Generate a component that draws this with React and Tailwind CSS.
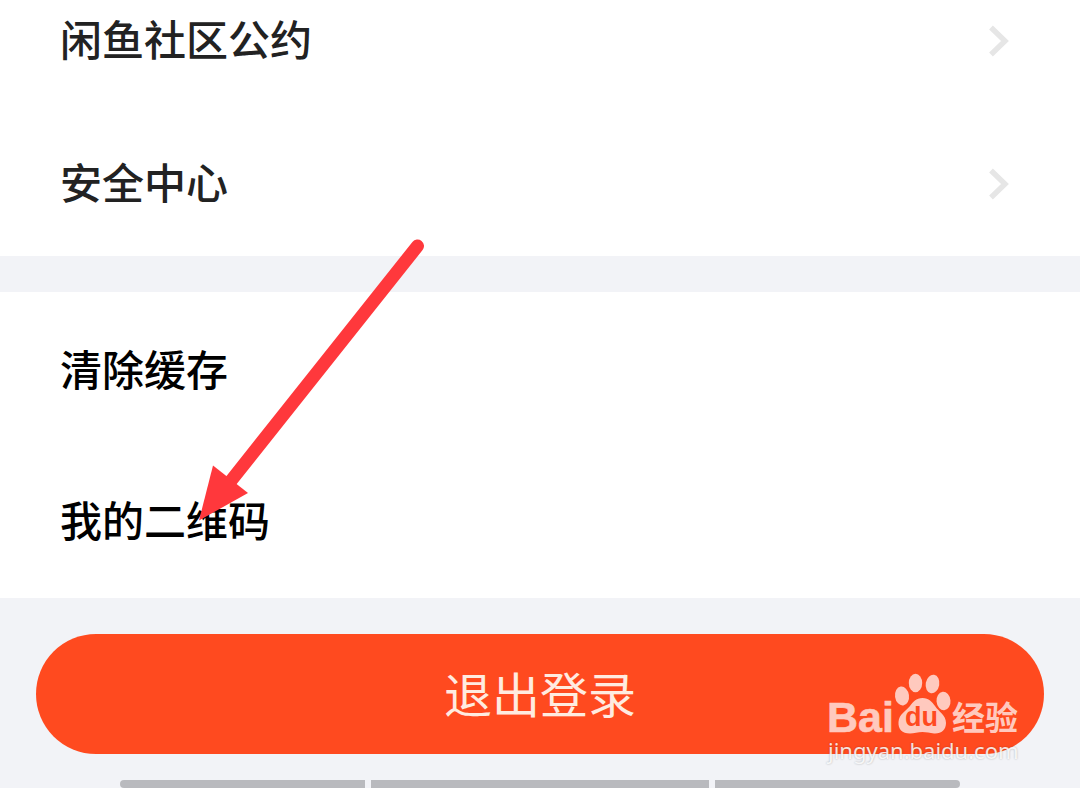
function Chevron() {
  return (
    <svg className="h-8 w-5 shrink-0" viewBox="0 0 20 32" fill="none" aria-hidden="true">
      <path d="M2 2.5 L16 16 L2 29.5" stroke="#e6e6e6" strokeWidth="5.4" />
    </svg>
  );
}

function Row({ label, chevron = false, className }) {
  return (
    <li>
      <a href="#" className={`flex items-center justify-between pl-[60px] pr-[71px] ${className}`}>
        <span className="pb-[6px] text-[42px] leading-[60px] font-medium">{label}</span>
        {chevron && <Chevron />}
      </a>
    </li>
  );
}

function Arrow() {
  return (
    <svg
      className="pointer-events-none absolute left-[190px] top-[230px] h-[300px] w-[250px]"
      viewBox="190 230 250 300"
      aria-hidden="true"
    >
      <path d="M417.500 246 L230 482" stroke="#ff383c" strokeWidth="13" strokeLinecap="round" />
      <path d="M213 465.500 L248 493 L199 520.500 Z" fill="#ff383c" />
    </svg>
  );
}

function Watermark() {
  return (
    <div className="pointer-events-none absolute bottom-[26px] right-[50px] w-[210px] font-['Noto_Sans','Noto_Sans_CJK_SC',sans-serif]">
      <svg className="block h-[66px] w-[210px] overflow-visible" viewBox="820 672 210 66" aria-label="Baidu 经验">
        <g fill="#ffc9be">
          <text x="827" y="732" fontSize="43" fontWeight="700" stroke="#ffc9be" strokeWidth="0.6" fontFamily="Liberation Sans, sans-serif">Bai</text>
          <ellipse cx="902" cy="696" rx="7" ry="9.500" transform="rotate(-8 902 696)" />
          <ellipse cx="915.500" cy="683" rx="6.700" ry="9.300" />
          <ellipse cx="932.500" cy="684" rx="6.800" ry="9.300" transform="rotate(10 932.500 684)" />
          <ellipse cx="943.500" cy="701" rx="7" ry="9.300" transform="rotate(-5 943.500 701)" />
          <path d="M922.500 698 C929 698 932 702 935 706 C939 712 946 715 946 723 C946 730 941 734 934 733.500 C930 733 926 732 922.500 732 C918 732 914 733.500 910 733.500 C902 733.500 898 729 898.500 722 C899 714 906 711 910 706 C913 702 916 698 922.500 698 Z" />
          <text x="952" y="730" fontSize="33" fontWeight="700" fontFamily="Noto Sans CJK SC, sans-serif">经验</text>
        </g>
        <text x="905" y="726" fontSize="27" fontWeight="700" fill="#ff4a1f" fontFamily="Liberation Sans, sans-serif">du</text>
      </svg>
      <p className="pl-2 text-[22px] leading-[24px] text-white/85 [text-shadow:0_0_2px_rgb(0_0_0/0.3)]">jingyan.baidu.com</p>
    </div>
  );
}

export default function App() {
  return (
    <main className="relative min-h-screen overflow-hidden bg-[#f2f3f7] font-['Noto_Sans_CJK_SC',sans-serif]">
      <ul className="bg-white text-[#222222]">
        <Row label="闲鱼社区公约" chevron className="h-[112px] pb-[30px]" />
        <Row label="安全中心" chevron className="h-36" />
      </ul>
      <ul className="mt-9 bg-white pt-[3px] text-black">
        <Row label="清除缓存" className="h-[151px]" />
        <Row label="我的二维码" className="h-[152px]" />
      </ul>
      <footer className="relative pt-9">
        <div className="px-9">
          <button type="button" className="h-[120px] w-full rounded-full bg-[#ff4a1f] pb-1 text-[48px] text-[#ffebe0]">
            退出登录
          </button>
        </div>
        <div className="mt-[26px] flex gap-[6px] px-[120px]">
          <div className="h-2 flex-[245] rounded-l-full bg-[#b9babe]" />
          <div className="h-2 flex-[338] bg-[#b9babe]" />
          <div className="h-2 flex-[245] rounded-r-full bg-[#b9babe]" />
        </div>
        <Watermark />
      </footer>
      <Arrow />
    </main>
  );
}
